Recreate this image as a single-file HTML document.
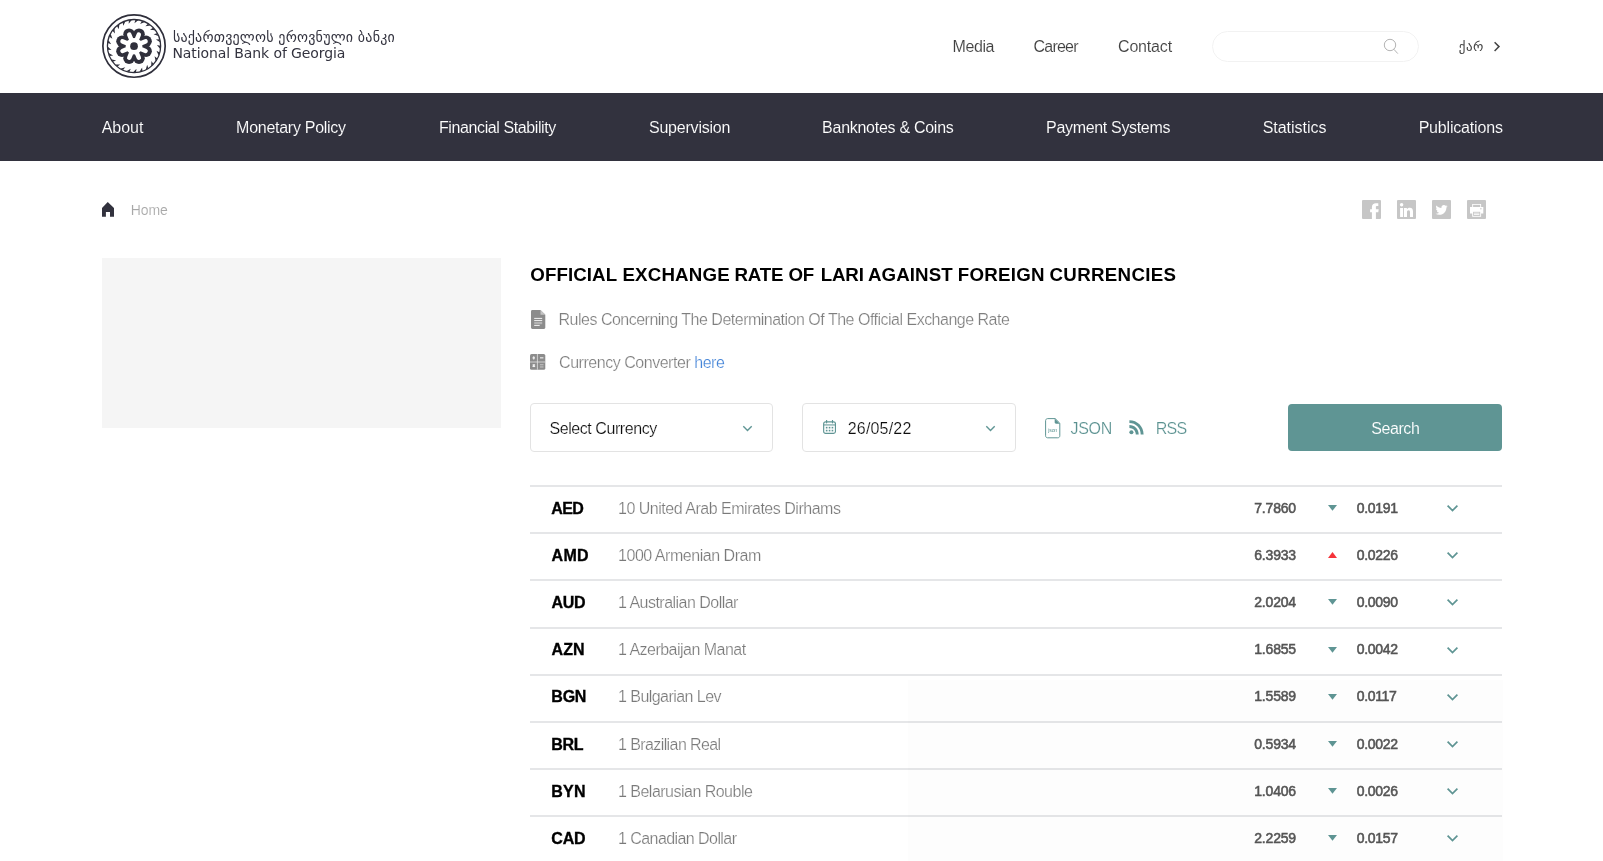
<!DOCTYPE html>
<html lang="en"><head><meta charset="utf-8"><title>Official exchange rate of LARI against foreign currencies</title>
<style>
*{box-sizing:border-box;margin:0;padding:0}
html,body{width:1603px;height:861px;overflow:hidden;background:#fff}
body{position:relative;font-family:"Liberation Sans",Arial,Helvetica,sans-serif;color:#000}
#pg{position:absolute;left:0;top:0;width:1603px;height:861px;will-change:transform}
.t{position:absolute;white-space:nowrap;font-size:16px;line-height:20px}
.ic{position:absolute;display:block}
.logo{position:absolute;left:101px;top:13px}
.lt{font-family:"DejaVu Sans","Liberation Sans",sans-serif;color:#33333f;font-size:14px;line-height:16px}
.top{color:#404040;-webkit-text-stroke:0.12px #fff}
.sbox{position:absolute;left:1212px;top:31px;width:206.5px;height:30.5px;border:1px solid #f2f2f2;border-radius:16px}
.navbar{position:absolute;left:0;top:93px;width:1603px;height:68px;background:#32323e}
.nav{color:#fff;-webkit-text-stroke:0.1px #32323e}
.home{font-size:14px;color:#a8a8a8;-webkit-text-stroke:0.15px #fff}
.gbox{position:absolute;left:102px;top:258px;width:399px;height:170px;background:#f5f5f5}
h1{font-size:18.72px;font-weight:bold}
.h1{font-size:18.72px;line-height:24px;font-weight:bold;color:#000}
.ln{color:#7e7e7e;-webkit-text-stroke:0.22px #fff}
.ln a{color:#4585d8;text-decoration:none}
.sel{position:absolute;top:403px;height:49px;border:1px solid #e3e3e3;border-radius:4px;background:#fff}
.seltx{color:#0c0c0c;-webkit-text-stroke:0.2px #fff}
.tl{color:#5a9190;-webkit-text-stroke:0.2px #fff}
.btn{position:absolute;left:1288px;top:404px;width:214px;height:47px;background:#5f9594;border-radius:4px}
.btntx{color:#fff;-webkit-text-stroke:0.1px #5f9594}
.line{position:absolute;left:530px;width:972px;height:2px;background:#e5e6e8}
.code{font-weight:bold;color:#000;-webkit-text-stroke:0.35px #000}
.cname{color:#7a7a7a;-webkit-text-stroke:0.22px #fff}
.num{color:#555;font-size:14px;-webkit-text-stroke:0.55px #555}
.cookie{position:absolute;left:908px;top:680px;width:595px;height:181px;background:rgba(50,50,62,0.012)}
</style></head><body><div id="pg">
<svg class="logo" width="67" height="67" viewBox="0 0 67 67">
<circle cx="33.03" cy="33.1" r="31.15" fill="none" stroke="#2f2f3b" stroke-width="1.7"/>
<circle cx="33.03" cy="33.1" r="26.6" fill="none" stroke="#2f2f3b" stroke-width="1.3"/>
<path d="M34.41 6.74L37.52 7.09L33.43 10.20ZM40.92 7.91L43.85 9.02L39.11 11.02ZM46.94 10.66L49.50 12.47L44.41 13.23ZM52.08 14.83L54.11 17.21L49.00 16.68ZM56.03 20.14L57.40 22.95L52.58 21.17ZM58.53 26.27L59.16 29.33L54.93 26.40ZM59.43 32.82L59.28 35.95L55.91 32.06ZM58.67 39.40L57.74 42.39L55.45 37.78ZM56.30 45.58L54.66 48.24L53.58 43.21ZM52.46 50.97L50.21 53.14L50.42 48.00ZM47.41 55.24L44.69 56.79L46.16 51.86ZM41.45 58.12L38.43 58.94L41.09 54.54ZM34.96 59.43L31.83 59.47L35.50 55.87ZM28.35 59.08L25.31 58.35L29.76 55.77ZM22.04 57.10L19.28 55.63L24.23 54.24ZM16.42 53.62L14.10 51.51L19.25 51.39ZM11.84 48.84L10.12 46.22L15.13 47.39ZM8.59 43.07L7.58 40.11L12.14 42.49ZM6.87 36.68L6.63 33.56L10.46 37.00ZM6.80 30.07L7.35 26.98L10.20 31.26ZM8.38 23.64L9.68 20.79L11.38 25.64ZM11.51 17.81L13.47 15.37L13.91 20.49ZM15.99 12.94L18.50 11.06L17.65 16.14ZM21.54 9.33L24.44 8.14L22.35 12.84ZM27.81 7.22L30.91 6.79L27.72 10.82Z" fill="#2f2f3b"/>
<circle cx="38.00" cy="21.19" r="5.8" fill="#2f2f3b"/>
<circle cx="45.04" cy="28.23" r="5.8" fill="#2f2f3b"/>
<circle cx="45.04" cy="38.17" r="5.8" fill="#2f2f3b"/>
<circle cx="38.00" cy="45.21" r="5.8" fill="#2f2f3b"/>
<circle cx="28.06" cy="45.21" r="5.8" fill="#2f2f3b"/>
<circle cx="21.02" cy="38.17" r="5.8" fill="#2f2f3b"/>
<circle cx="21.02" cy="28.23" r="5.8" fill="#2f2f3b"/>
<circle cx="28.06" cy="21.19" r="5.8" fill="#2f2f3b"/>
<circle cx="33.03" cy="33.2" r="12" fill="#2f2f3b"/>
<line x1="33.03" y1="33.20" x2="37.81" y2="21.65" stroke="#fff" stroke-width="4.5" stroke-linecap="round"/>
<line x1="33.03" y1="33.20" x2="44.58" y2="28.42" stroke="#fff" stroke-width="4.5" stroke-linecap="round"/>
<line x1="33.03" y1="33.20" x2="44.58" y2="37.98" stroke="#fff" stroke-width="4.5" stroke-linecap="round"/>
<line x1="33.03" y1="33.20" x2="37.81" y2="44.75" stroke="#fff" stroke-width="4.5" stroke-linecap="round"/>
<line x1="33.03" y1="33.20" x2="28.25" y2="44.75" stroke="#fff" stroke-width="4.5" stroke-linecap="round"/>
<line x1="33.03" y1="33.20" x2="21.48" y2="37.98" stroke="#fff" stroke-width="4.5" stroke-linecap="round"/>
<line x1="33.03" y1="33.20" x2="21.48" y2="28.42" stroke="#fff" stroke-width="4.5" stroke-linecap="round"/>
<line x1="33.03" y1="33.20" x2="28.25" y2="21.65" stroke="#fff" stroke-width="4.5" stroke-linecap="round"/>
<circle cx="33.03" cy="33.2" r="8.3" fill="#fff"/>
<circle cx="33.03" cy="33.2" r="3.85" fill="#2f2f3b"/>
</svg>
<div id="lge" class="t lt" style="left:172.90px;top:29px;letter-spacing:0.204px;">საქართველოს ეროვნული ბანკი</div>
<div id="len" class="t lt" style="left:172.50px;top:45px;letter-spacing:-0.103px;">National Bank of Georgia</div>
<div id="top0" class="t top" style="left:952.58px;top:37px;letter-spacing:-0.419px;">Media</div><div id="top1" class="t top" style="left:1033.62px;top:37px;letter-spacing:-0.800px;">Career</div><div id="top2" class="t top" style="left:1118.02px;top:37px;letter-spacing:-0.173px;">Contact</div>
<div class="sbox"></div>
<svg class="ic" style="left:1382px;top:37px" width="18" height="18" viewBox="0 0 18 18"><circle cx="8" cy="8" r="5.7" fill="none" stroke="#aaa" stroke-width="0.9"/><path d="M11.9 12.3L15.8 16.6" stroke="#aaa" stroke-width="0.9"/></svg>
<div id="kar" class="t top" style="left:1458.74px;top:37px;letter-spacing:0.535px;font-family:'DejaVu Sans',sans-serif;font-size:13px;-webkit-text-stroke:0;color:#444">ქარ</div>
<svg class="ic" style="left:1492px;top:41px" width="9" height="11" viewBox="0 0 9 11"><path d="M2.6 1.2L7 5.6L2.6 10" fill="none" stroke="#444" stroke-width="1.5"/></svg>
<div class="navbar"></div>
<div id="nav0" class="t nav" style="left:101.72px;top:118px;letter-spacing:-0.045px;">About</div>
<div id="nav1" class="t nav" style="left:236.11px;top:118px;letter-spacing:-0.275px;">Monetary Policy</div>
<div id="nav2" class="t nav" style="left:439.01px;top:118px;letter-spacing:-0.399px;">Financial Stability</div>
<div id="nav3" class="t nav" style="left:648.99px;top:118px;letter-spacing:-0.217px;">Supervision</div>
<div id="nav4" class="t nav" style="left:822.11px;top:118px;letter-spacing:-0.276px;">Banknotes &amp; Coins</div>
<div id="nav5" class="t nav" style="left:1046.11px;top:118px;letter-spacing:-0.329px;">Payment Systems</div>
<div id="nav6" class="t nav" style="left:1262.66px;top:118px;letter-spacing:-0.023px;">Statistics</div>
<div id="nav7" class="t nav" style="left:1418.63px;top:118px;letter-spacing:-0.183px;">Publications</div>
<svg class="ic" style="left:102px;top:202px" width="12" height="15" viewBox="0 0 12 15"><path d="M5.75 0L12 6V14.8H8V10H3.9V14.8H0V6Z" fill="#32323e"/></svg>
<div id="home" class="t home" style="left:130.66px;top:200px;letter-spacing:-0.073px;">Home</div>
<div class="gbox"></div>
<h1><span id="h1w0" class="t h1" style="left:530.30px;top:263px;letter-spacing:0.082px;">OFFICIAL</span> <span id="h1w1" class="t h1" style="left:622.47px;top:263px;letter-spacing:0.164px;">EXCHANGE</span> <span id="h1w2" class="t h1" style="left:734.47px;top:263px;letter-spacing:-0.148px;">RATE</span> <span id="h1w3" class="t h1" style="left:788.43px;top:263px;letter-spacing:-0.261px;">OF</span> <span id="h1w4" class="t h1" style="left:820.64px;top:263px;letter-spacing:-0.135px;">LARI</span> <span id="h1w5" class="t h1" style="left:868.02px;top:263px;letter-spacing:0.073px;">AGAINST</span> <span id="h1w6" class="t h1" style="left:957.76px;top:263px;letter-spacing:0.270px;">FOREIGN</span> <span id="h1w7" class="t h1" style="left:1049.55px;top:263px;letter-spacing:0.314px;">CURRENCIES</span></h1>
<div id="rules" class="t ln" style="left:558.55px;top:310px;letter-spacing:-0.509px;word-spacing:0.053px;">Rules Concerning The Determination Of The Official Exchange Rate</div>
<div id="cc" class="t ln" style="left:559.05px;top:353px;letter-spacing:-0.466px;">Currency Converter <a>here</a></div>
<div class="sel" style="left:530px;width:243px"></div>
<div class="sel" style="left:802px;width:214px"></div>
<div id="selcur" class="t seltx" style="left:549.41px;top:419px;letter-spacing:-0.424px;">Select Currency</div>
<div id="date" class="t seltx" style="left:847.71px;top:419px;letter-spacing:0.195px;">26/05/22</div>
<svg class="ic" style="left:742px;top:425px" width="11" height="7" viewBox="0 0 11 7"><path d="M1.3 1.2L5.5 5.4L9.7 1.2" fill="none" stroke="#5f9594" stroke-width="1.4"/></svg><svg class="ic" style="left:985px;top:425px" width="11" height="7" viewBox="0 0 11 7"><path d="M1.3 1.2L5.5 5.4L9.7 1.2" fill="none" stroke="#5f9594" stroke-width="1.4"/></svg>
<div id="json" class="t tl" style="left:1070.52px;top:419px;letter-spacing:-0.283px;">JSON</div>
<div id="rss" class="t tl" style="left:1155.65px;top:419px;letter-spacing:-0.670px;">RSS</div>
<div class="btn"></div>
<div id="search" class="t btntx" style="left:1371.15px;top:419px;letter-spacing:-0.408px;">Search</div>
<div class="line" style="top:485px"></div>
<div id="code0" class="t code" style="left:551.25px;top:499px;letter-spacing:-0.582px;">AED</div>
<div id="name0" class="t cname" style="left:618.02px;top:499px;letter-spacing:-0.485px;">10 United Arab Emirates Dirhams</div>
<div id="rate0" class="t num" style="left:1254.28px;top:498px;letter-spacing:-0.193px;">7.7860</div>
<svg class="ic" style="left:1328px;top:505px" width="9" height="6" viewBox="0 0 9 6"><path d="M0 0H9L4.5 5.8Z" fill="#5f9594"/></svg>
<div id="diff0" class="t num" style="left:1356.67px;top:498px;letter-spacing:-0.312px;">0.0191</div>
<svg class="ic" style="left:1446px;top:504px" width="13" height="9" viewBox="0 0 13 9"><path d="M1.6 1.6L6.5 6.6L11.4 1.6" fill="none" stroke="#5f9594" stroke-width="1.7"/></svg>
<div class="line" style="top:532px"></div>
<div id="code1" class="t code" style="left:551.46px;top:546px;letter-spacing:0.380px;">AMD</div>
<div id="name1" class="t cname" style="left:618.02px;top:546px;letter-spacing:-0.467px;">1000 Armenian Dram</div>
<div id="rate1" class="t num" style="left:1254.28px;top:545px;letter-spacing:-0.193px;">6.3933</div>
<svg class="ic" style="left:1328px;top:552px" width="9" height="6" viewBox="0 0 9 6"><path d="M0 6H9L4.5 0.1Z" fill="#f5333a"/></svg>
<div id="diff1" class="t num" style="left:1356.67px;top:545px;letter-spacing:-0.312px;">0.0226</div>
<svg class="ic" style="left:1446px;top:551px" width="13" height="9" viewBox="0 0 13 9"><path d="M1.6 1.6L6.5 6.6L11.4 1.6" fill="none" stroke="#5f9594" stroke-width="1.7"/></svg>
<div class="line" style="top:579px"></div>
<div id="code2" class="t code" style="left:551.46px;top:593px;letter-spacing:-0.296px;">AUD</div>
<div id="name2" class="t cname" style="left:618.02px;top:593px;letter-spacing:-0.523px;">1 Australian Dollar</div>
<div id="rate2" class="t num" style="left:1254.28px;top:592px;letter-spacing:-0.193px;">2.0204</div>
<svg class="ic" style="left:1328px;top:599px" width="9" height="6" viewBox="0 0 9 6"><path d="M0 0H9L4.5 5.8Z" fill="#5f9594"/></svg>
<div id="diff2" class="t num" style="left:1356.67px;top:592px;letter-spacing:-0.312px;">0.0090</div>
<svg class="ic" style="left:1446px;top:598px" width="13" height="9" viewBox="0 0 13 9"><path d="M1.6 1.6L6.5 6.6L11.4 1.6" fill="none" stroke="#5f9594" stroke-width="1.7"/></svg>
<div class="line" style="top:627px"></div>
<div id="code3" class="t code" style="left:551.46px;top:640px;letter-spacing:0.169px;">AZN</div>
<div id="name3" class="t cname" style="left:618.02px;top:640px;letter-spacing:-0.523px;">1 Azerbaijan Manat</div>
<div id="rate3" class="t num" style="left:1254.28px;top:639px;letter-spacing:-0.193px;">1.6855</div>
<svg class="ic" style="left:1328px;top:647px" width="9" height="6" viewBox="0 0 9 6"><path d="M0 0H9L4.5 5.8Z" fill="#5f9594"/></svg>
<div id="diff3" class="t num" style="left:1356.67px;top:639px;letter-spacing:-0.312px;">0.0042</div>
<svg class="ic" style="left:1446px;top:646px" width="13" height="9" viewBox="0 0 13 9"><path d="M1.6 1.6L6.5 6.6L11.4 1.6" fill="none" stroke="#5f9594" stroke-width="1.7"/></svg>
<div class="line" style="top:674px"></div>
<div id="code4" class="t code" style="left:551.31px;top:687px;letter-spacing:-0.212px;">BGN</div>
<div id="name4" class="t cname" style="left:618.02px;top:687px;letter-spacing:-0.548px;">1 Bulgarian Lev</div>
<div id="rate4" class="t num" style="left:1254.28px;top:686px;letter-spacing:-0.193px;">1.5589</div>
<svg class="ic" style="left:1328px;top:694px" width="9" height="6" viewBox="0 0 9 6"><path d="M0 0H9L4.5 5.8Z" fill="#5f9594"/></svg>
<div id="diff4" class="t num" style="left:1356.67px;top:686px;letter-spacing:-0.312px;">0.0117</div>
<svg class="ic" style="left:1446px;top:693px" width="13" height="9" viewBox="0 0 13 9"><path d="M1.6 1.6L6.5 6.6L11.4 1.6" fill="none" stroke="#5f9594" stroke-width="1.7"/></svg>
<div class="line" style="top:721px"></div>
<div id="code5" class="t code" style="left:551.31px;top:735px;letter-spacing:-0.383px;">BRL</div>
<div id="name5" class="t cname" style="left:618.02px;top:735px;letter-spacing:-0.593px;">1 Brazilian Real</div>
<div id="rate5" class="t num" style="left:1254.28px;top:734px;letter-spacing:-0.193px;">0.5934</div>
<svg class="ic" style="left:1328px;top:741px" width="9" height="6" viewBox="0 0 9 6"><path d="M0 0H9L4.5 5.8Z" fill="#5f9594"/></svg>
<div id="diff5" class="t num" style="left:1356.67px;top:734px;letter-spacing:-0.312px;">0.0022</div>
<svg class="ic" style="left:1446px;top:740px" width="13" height="9" viewBox="0 0 13 9"><path d="M1.6 1.6L6.5 6.6L11.4 1.6" fill="none" stroke="#5f9594" stroke-width="1.7"/></svg>
<div class="line" style="top:768px"></div>
<div id="code6" class="t code" style="left:551.31px;top:782px;letter-spacing:0.183px;">BYN</div>
<div id="name6" class="t cname" style="left:618.02px;top:782px;letter-spacing:-0.516px;">1 Belarusian Rouble</div>
<div id="rate6" class="t num" style="left:1254.28px;top:781px;letter-spacing:-0.193px;">1.0406</div>
<svg class="ic" style="left:1328px;top:788px" width="9" height="6" viewBox="0 0 9 6"><path d="M0 0H9L4.5 5.8Z" fill="#5f9594"/></svg>
<div id="diff6" class="t num" style="left:1356.67px;top:781px;letter-spacing:-0.312px;">0.0026</div>
<svg class="ic" style="left:1446px;top:787px" width="13" height="9" viewBox="0 0 13 9"><path d="M1.6 1.6L6.5 6.6L11.4 1.6" fill="none" stroke="#5f9594" stroke-width="1.7"/></svg>
<div class="line" style="top:815px"></div>
<div id="code7" class="t code" style="left:551.22px;top:829px;letter-spacing:-0.106px;">CAD</div>
<div id="name7" class="t cname" style="left:618.02px;top:829px;letter-spacing:-0.567px;">1 Canadian Dollar</div>
<div id="rate7" class="t num" style="left:1254.28px;top:828px;letter-spacing:-0.193px;">2.2259</div>
<svg class="ic" style="left:1328px;top:835px" width="9" height="6" viewBox="0 0 9 6"><path d="M0 0H9L4.5 5.8Z" fill="#5f9594"/></svg>
<div id="diff7" class="t num" style="left:1356.67px;top:828px;letter-spacing:-0.312px;">0.0157</div>
<svg class="ic" style="left:1446px;top:834px" width="13" height="9" viewBox="0 0 13 9"><path d="M1.6 1.6L6.5 6.6L11.4 1.6" fill="none" stroke="#5f9594" stroke-width="1.7"/></svg>
<svg class="ic" style="left:1362px;top:200px" width="19" height="19" viewBox="0 0 19 19"><rect width="19" height="19" rx="1" fill="#c6c6c6"/><path d="M9.9 19V12.2H8.1V9.3H9.9V7.3C9.9 4.6 11.5 3.2 13.9 3.2C15 3.2 16 3.3 16.3 3.35V6H14.8C13.6 6 13.9 6.8 13.9 7.6V9.3H16.7L16.3 12.2H13.9V19Z" fill="#fff"/></svg>
<svg class="ic" style="left:1397px;top:200px" width="19" height="19" viewBox="0 0 19 19"><rect width="19" height="19" rx="1" fill="#c6c6c6"/><circle cx="4.6" cy="4.7" r="1.75" fill="#fff"/><rect x="3.1" y="8" width="3" height="9" fill="#fff"/><path d="M7 8H9.9V9.3C10.4 8.4 11.4 7.7 12.8 7.7C15.2 7.7 16 9.3 16 11.7V17H13V12.3C13 11.1 12.7 10.3 11.6 10.3C10.4 10.3 10 11.2 10 12.3V17H7Z" fill="#fff"/></svg>
<svg class="ic" style="left:1432px;top:200px" width="19" height="19" viewBox="0 0 19 19"><rect width="19" height="19" rx="1" fill="#c6c6c6"/><path d="M15.6 6.2C15.2 6.4 14.7 6.55 14.2 6.6C14.7 6.3 15.1 5.8 15.3 5.2C14.8 5.5 14.3 5.7 13.7 5.8C13.25 5.3 12.6 5 11.9 5C10.5 5 9.4 6.1 9.4 7.5C9.4 7.7 9.4 7.9 9.5 8.05C7.4 7.95 5.6 6.95 4.4 5.45C4.2 5.8 4.05 6.25 4.05 6.7C4.05 7.55 4.5 8.3 5.15 8.75C4.75 8.75 4.35 8.6 4 8.45C4 9.7 4.9 10.7 6 10.9C5.6 11 5.2 11 4.9 10.95C5.2 11.95 6.1 12.65 7.2 12.7C6.15 13.5 4.85 13.9 3.5 13.75C4.6 14.45 5.9 14.85 7.3 14.85C11.9 14.85 14.4 11.05 14.4 7.75V7.45C14.9 7.1 15.3 6.7 15.6 6.2Z" fill="#fff"/></svg>
<svg class="ic" style="left:1467px;top:200px" width="19" height="19" viewBox="0 0 19 19"><rect width="19" height="19" rx="1" fill="#c6c6c6"/><path d="M5.2 3.9H14.1V7H16.3V13.5H14.1V16.8H5.2V13.5H3V7H5.2Z" fill="#fff"/><rect x="6.1" y="4.8" width="7.1" height="2.2" fill="#c6c6c6"/><rect x="6.1" y="11.8" width="7.1" height="4.1" fill="#c6c6c6"/><rect x="6.9" y="12.7" width="5.5" height="0.8" fill="#fff"/><rect x="6.9" y="14.2" width="5.5" height="0.8" fill="#fff"/><circle cx="13.9" cy="8.8" r="0.7" fill="#c6c6c6"/></svg>
<svg class="ic" style="left:530.8px;top:310px" width="15" height="19" viewBox="0 0 15 19"><path d="M1.3 0H9.5L14.3 4.8V17.6C14.3 18.3 13.7 18.9 13 18.9H1.3C0.6 18.9 0 18.3 0 17.6V1.3C0 0.6 0.6 0 1.3 0Z" fill="#8c8c8c"/><path d="M9.5 0L14.3 4.8H9.5Z" fill="#c4c4c4"/><path d="M3.2 8.4H11.2M3.2 10.6H11.2M3.2 15.4H8.7" stroke="#f4f4f4" stroke-width="1"/><rect x="3.2" y="12" width="8" height="2.2" fill="#b4b4b4"/></svg>
<svg class="ic" style="left:530px;top:354px" width="16" height="16" viewBox="0 0 16 16"><rect x="0" y="0" width="15.3" height="15.8" rx="1.6" fill="#8c8c8c"/><path d="M7.4 0V15.8M0 8H15.3" stroke="#e2e2e2" stroke-width="0.8"/><g fill="#f2f2f2"><rect x="3.2" y="2.3" width="1.1" height="3.2"/><rect x="2.5" y="3.3" width="2.5" height="1.2"/><rect x="10" y="3.3" width="3.4" height="1.1"/><path d="M2.7 10.5L4.9 12.7M4.9 10.5L2.7 12.7" stroke="#f2f2f2" stroke-width="1.3"/></g><g fill="#c2c2c2"><rect x="9.9" y="10.2" width="3.6" height="1.1"/><rect x="9.9" y="12.4" width="3.6" height="1.1"/></g></svg>
<svg class="ic" style="left:822.6px;top:419.8px" width="13.3" height="14.25" viewBox="0 0 14 15"><rect x="0.7" y="1.9" width="12.4" height="12.2" rx="2" fill="none" stroke="#5f9594" stroke-width="1.2"/><path d="M0.7 5.2H13.1" stroke="#5f9594" stroke-width="1.1"/><path d="M3.8 0.3V3M10 0.3V3" stroke="#5f9594" stroke-width="1.2" stroke-linecap="round"/><g fill="#5f9594"><rect x="3" y="7.2" width="1.7" height="1.7"/><rect x="6.05" y="7.2" width="1.7" height="1.7"/><rect x="9.1" y="7.2" width="1.7" height="1.7"/><rect x="3" y="10.3" width="1.7" height="1.7"/><rect x="6.05" y="10.3" width="1.7" height="1.7"/><rect x="9.1" y="10.3" width="1.7" height="1.7"/></g></svg>
<svg class="ic" style="left:1045px;top:417.7px" width="16" height="21" viewBox="0 0 16 21"><path d="M2.6 0.6H10.2L14.8 5.2V17.8C14.8 19 13.9 19.8 12.8 19.8H2.6C1.5 19.8 0.6 19 0.6 17.8V2.6C0.6 1.5 1.5 0.6 2.6 0.6Z" fill="none" stroke="#5f9594" stroke-width="1"/><path d="M9.7 0.6L14.8 5.7H11C10.3 5.7 9.7 5.2 9.7 4.5Z" fill="#5f9594"/><text x="7.7" y="13.6" font-family="'Liberation Sans',sans-serif" font-size="5.2" text-anchor="middle" fill="#5f9594" letter-spacing="-0.2">json</text></svg>
<svg class="ic" style="left:1129px;top:420.3px" width="15" height="15" viewBox="0 0 15 15"><circle cx="2.4" cy="12.3" r="2.05" fill="#5f9594"/><path d="M0.4 0.2C8.4 0.2 14.6 6.4 14.6 14.4H11.7C11.7 8 6.8 3.1 0.4 3.1Z" fill="#5f9594"/><path d="M0.4 5.1C5.6 5.1 9.7 9.2 9.7 14.4H6.8C6.8 10.8 4 8 0.4 8Z" fill="#5f9594"/></svg>

<div class="cookie"></div>
</div></body></html>
